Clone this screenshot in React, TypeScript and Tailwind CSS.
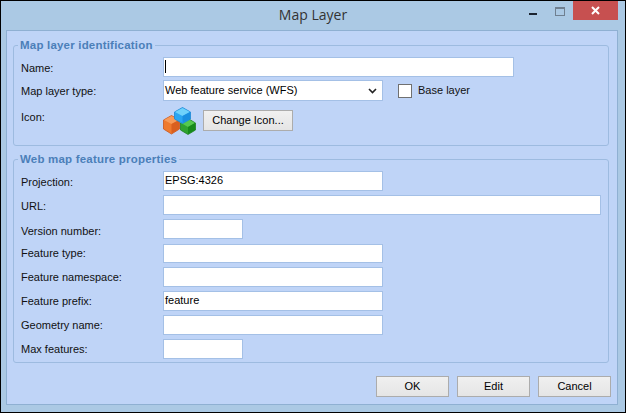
import type { ReactNode } from "react";

const inputClass = "h-5 border border-[#a4c0e6] bg-white px-px text-[11px] leading-[17px] text-black";

function Row({ label, children, className = "", labelPad = "pt-[2px]" }: { label: string; children?: ReactNode; className?: string; labelPad?: string }) {
  return (
    <div className={`flex items-center ${className}`}>
      <label className={`w-[149px] shrink-0 pl-[7px] ${labelPad}`}>{label}</label>
      {children}
    </div>
  );
}

function TextBox({ width, value, height = "" }: { width: string; value?: string; height?: string }) {
  return <div className={`${inputClass} ${width} ${height}`}>{value}</div>;
}

function DialogButton({ children, width }: { children: ReactNode; width: string }) {
  return (
    <button className={`${width} h-[21px] border border-[#acacac] bg-gradient-to-b from-[#f0f0f0] to-[#e5e5e5] text-[11px] text-black`}>
      {children}
    </button>
  );
}

function Group({ title, children, className }: { title: string; children: ReactNode; className: string }) {
  return (
    <fieldset className={`rounded-[3px] border border-[#9dbbe0] ${className}`}>
      <legend className="ml-[4px] px-[2px] text-[11.5px] leading-[14px] font-bold tracking-[0.2px] text-[#4b7fb9]">{title}</legend>
      {children}
    </fieldset>
  );
}

function CubesIcon() {
  return (
    <svg width="33" height="28" viewBox="0 0 33 28" strokeLinejoin="round">
      {/* green cube */}
      <path d="M17.5 16 L25 11.5 L32.5 16 L32.5 23 L25 27.5 L17.5 23 Z" fill="#2fa32f" stroke="#1f7f22" strokeWidth="0.8" />
      <path d="M18 16 L25 12 L32 16 L25 20 Z" fill="#55c94f" />
      <path d="M25 20 L32 16 L32 23 L25 27 Z" fill="#168a1b" />
      {/* orange cube */}
      <path d="M0.5 13 L8.5 8.5 L16.5 13 L16.5 22 L8.5 27 L0.5 22 Z" fill="#ef7a2e" stroke="#c9551c" strokeWidth="0.8" />
      <path d="M1 13 L8.5 9 L16 13 L8.5 17 Z" fill="#f79a58" />
      <path d="M8.5 17 L16 13 L16 22 L8.5 26.5 Z" fill="#d95f1f" />
      {/* blue cube */}
      <path d="M11.5 5 L19.5 0.5 L27.5 5 L27.5 12 L19.5 16.5 L11.5 12 Z" fill="#2aa6f2" stroke="#1b86d4" strokeWidth="0.8" />
      <path d="M12 5 L19.5 1 L27 5 L19.5 9 Z" fill="#6fd2fb" />
      <path d="M19.5 9 L27 5 L27 12 L19.5 16 Z" fill="#1a8fe0" />
    </svg>
  );
}

export default function App() {
  return (
    <div className="flex h-[413px] w-[626px] flex-col overflow-hidden border border-black bg-[#abc9e4] font-['Liberation_Sans',sans-serif] text-[11px] text-[#111]">
      <div className="grid h-[29px] shrink-0 grid-cols-[1fr_auto_1fr]">
        <div />
        <div className="pt-[3px] font-['Open_Sans',sans-serif] text-[14px] leading-[21px] text-[#333]">Map Layer</div>
        <div className="flex items-start justify-end pr-[7px]">
          <div className="mt-[12px] mr-[18px] h-[2px] w-[8px] bg-[#1c2430]" />
          <div className="mt-[6px] mr-[8px] h-[9px] w-[10px] border border-t-2 border-[#6f7f90]" />
          <div className="flex h-[19px] w-[45px] items-center justify-center bg-[#c75050]">
            <svg width="9" height="9" viewBox="0 0 9 9">
              <path d="M1 1 L8 8 M8 1 L1 8" stroke="white" strokeWidth="2" />
            </svg>
          </div>
        </div>
      </div>

      <div className="ml-[5px] mr-[7px] flex h-[375px] flex-col border border-[#8fb0d2] bg-[#bfd4f7] pl-[6px] pr-[8px] pt-[7px]">
        <Group title="Map layer identification" className="h-[108px]">
          <div className="mt-[5px] flex flex-col">
            <Row label="Name:">
              <div className={`${inputClass} w-[351px] pl-[1px]`}>
                <div className="mt-[2px] h-[13px] w-px bg-black" />
              </div>
            </Row>
            <Row label="Map layer type:" className="mt-[3px]">
              <div className={`${inputClass} flex h-[21px] w-[220px] items-center justify-between pr-[5px]`}>
                <span>Web feature service (WFS)</span>
                <svg width="9" height="6" viewBox="0 0 9 6">
                  <path d="M1 1 L4.5 4.5 L8 1" fill="none" stroke="#222" strokeWidth="1.6" />
                </svg>
              </div>
              <div className="ml-[15px] h-[14px] w-[14px] border border-[#707070] bg-white" />
              <span className="ml-[6px]">Base layer</span>
            </Row>
            <div className="mt-[6px] flex items-start">
              <label className="w-[149px] shrink-0 pl-[7px] pt-[2px]">Icon:</label>
              <CubesIcon />
              <div className="ml-[7px] mt-[3px]">
                <DialogButton width="w-[90px]">Change Icon...</DialogButton>
              </div>
            </div>
          </div>
        </Group>

        <Group title="Web map feature properties" className="mt-[6px] h-[211px]">
          <div className="mt-[5px] flex flex-col gap-[4px]">
            <Row label="Projection:">
              <TextBox width="w-[220px]" value="EPSG:4326" />
            </Row>
            <Row label="URL:">
              <TextBox width="w-[438px]" />
            </Row>
            <Row label="Version number:" labelPad="pt-[4px]">
              <TextBox width="w-[80px]" />
            </Row>
            <Row label="Feature type:" labelPad="pt-0">
              <TextBox width="w-[220px]" height="!h-[19px]" />
            </Row>
            <Row label="Feature namespace:">
              <TextBox width="w-[220px]" />
            </Row>
            <Row label="Feature prefix:">
              <TextBox width="w-[220px]" value="feature" />
            </Row>
            <Row label="Geometry name:">
              <TextBox width="w-[220px]" />
            </Row>
            <Row label="Max features:">
              <TextBox width="w-[80px]" />
            </Row>
          </div>
        </Group>

        <div className="mt-[13px] mr-[-2px] flex justify-end gap-2">
          <DialogButton width="w-[73px]">OK</DialogButton>
          <DialogButton width="w-[73px]">Edit</DialogButton>
          <DialogButton width="w-[73px]">Cancel</DialogButton>
        </div>
      </div>
    </div>
  );
}
